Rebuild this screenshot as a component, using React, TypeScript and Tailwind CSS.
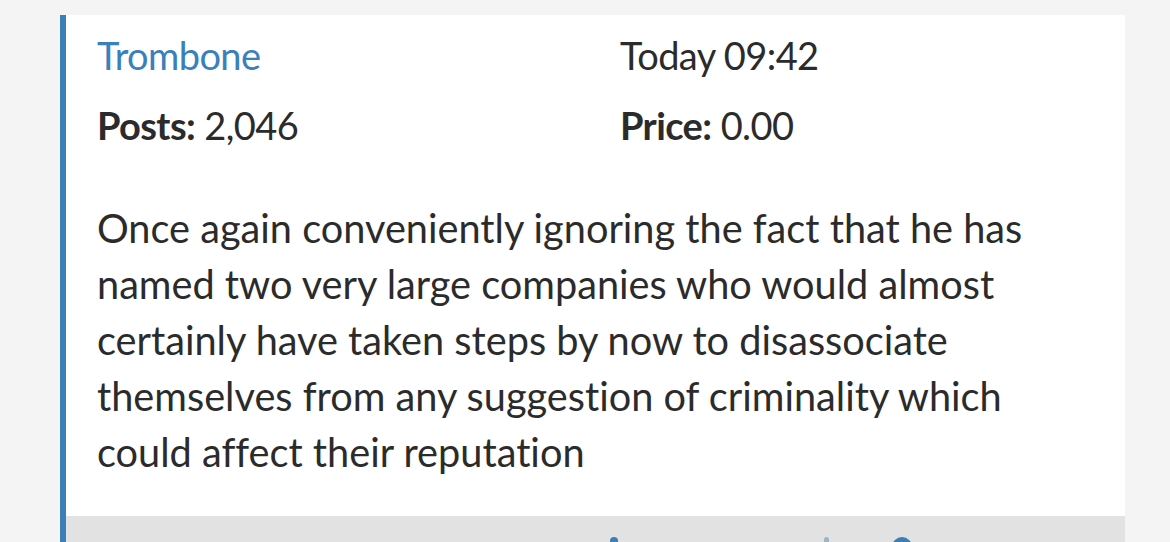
export default function App() {
  return (
    <div className="min-h-[542px] h-[542px] overflow-hidden bg-[#f4f4f4] pt-[15px] pl-[60px] font-['Lato',sans-serif] text-[#2b2b2b] [font-variant-ligatures:none]">
      <div className="w-[1065px] border-l-[6px] border-[#3a7fb8] bg-white">
        <div className="pl-[31px] pr-[30px] pt-[12px] pb-[36px] text-[39.7px] leading-[56px]">
          <div className="grid grid-cols-[523px_1fr] text-[38px] tracking-[-0.6px]">
            <a className="text-[#3a80ba]">Trombone</a>
            <span>Today 09:42</span>
          </div>
          <div className="grid grid-cols-[523px_1fr] mt-[14px] text-[38px] tracking-[-0.6px]">
            <p>
              <span className="font-bold">Posts:</span> 2,046
            </p>
            <p>
              <span className="font-bold">Price:</span> 0.00
            </p>
          </div>
          <p className="mt-[47px] max-w-[980px]">
            Once again conveniently ignoring the fact that he has named two very
            large companies who would almost certainly have taken steps by now
            to disassociate themselves from any suggestion of criminality which
            could affect their reputation
          </p>
        </div>
        <div className="h-[60px] bg-[#e2e2e2] flex items-start pt-[21px]">
          <div className="w-[544px]" />
          <div className="w-[8px] h-[14px] rounded-full bg-[#3a7fb8]" />
          <div className="w-[206px]" />
          <div className="w-[5px] h-[10px] rounded-full bg-[#9fb3c4]" />
          <div className="w-[63px]" />
          <div className="w-[20px] h-[20px] rounded-full bg-[#3a7fb8]" />
        </div>
      </div>
    </div>
  );
}
